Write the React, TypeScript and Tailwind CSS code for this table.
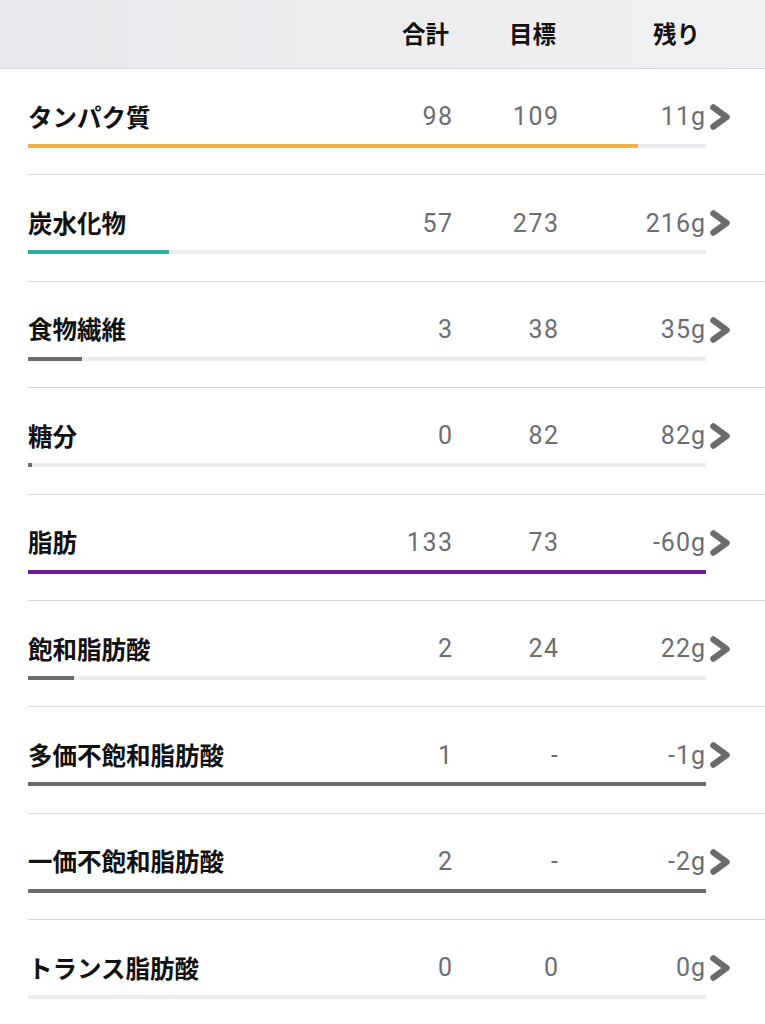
import React from 'react';

interface Nutrient {
  name: string;
  total: string;
  goal: string;
  left: string;
  pct: number;
  color: string;
}

const ROWS: Nutrient[] = [
  { name: 'タンパク質', total: '98', goal: '109', left: '11g', pct: 90, color: 'bg-[#f4b144]' },
  { name: '炭水化物', total: '57', goal: '273', left: '216g', pct: 20.8, color: 'bg-[#2bb3a0]' },
  { name: '食物繊維', total: '3', goal: '38', left: '35g', pct: 8, color: 'bg-[#6c6c70]' },
  { name: '糖分', total: '0', goal: '82', left: '82g', pct: 0.6, color: 'bg-[#6c6c70]' },
  { name: '脂肪', total: '133', goal: '73', left: '-60g', pct: 100, color: 'bg-[#6f1c98]' },
  { name: '飽和脂肪酸', total: '2', goal: '24', left: '22g', pct: 6.8, color: 'bg-[#6c6c70]' },
  { name: '多価不飽和脂肪酸', total: '1', goal: '-', left: '-1g', pct: 100, color: 'bg-[#6c6c70]' },
  { name: '一価不飽和脂肪酸', total: '2', goal: '-', left: '-2g', pct: 100, color: 'bg-[#6c6c70]' },
  { name: 'トランス脂肪酸', total: '0', goal: '0', left: '0g', pct: 0, color: 'bg-[#6c6c70]' },
];

const jp = "font-['Noto_Sans_CJK_JP','Noto_Sans',sans-serif]";
const num = "font-['Roboto','Noto_Sans_CJK_JP',sans-serif]";

const Chevron = () => (
  <svg width="26" height="28" viewBox="0 0 26 28" className="shrink-0">
    <polyline
      points="6.5,4.5 19.5,14 6.5,23.5"
      fill="none"
      stroke="#6b6b6f"
      strokeWidth="6.5"
      strokeLinecap="round"
      strokeLinejoin="round"
    />
  </svg>
);

export default function App() {
  return (
    <div className="w-[765px] h-[1024px] overflow-hidden bg-white">
      {/* Header */}
      <div className="h-[69px] bg-gradient-to-r from-[#e9e9ed] to-[#f1f1f3] border-b border-[#d4d4d8] flex items-center pl-[28px]">
        <div className="w-[324px]" />
        <div className={`w-[97px] text-right text-[23.5px] font-bold text-[#111] ${jp}`}>合計</div>
        <div className={`w-[107px] text-right text-[23.5px] font-bold text-[#111] ${jp}`}>目標</div>
        <div className={`w-[144px] text-right text-[23.5px] font-bold text-[#111] ${jp}`}>残り</div>
      </div>

      {/* Rows */}
      {ROWS.map((row) => (
        <div key={row.name} className="ml-[28px] h-[106.4px] border-b border-[#d9d9dc] pt-[32px]">
          <div className="flex items-center h-[32px]">
            <div className={`w-[324px] text-[24.5px] font-bold text-[#111] ${jp}`}>{row.name}</div>
            <div className={`w-[101.5px] text-right text-[25px] tracking-[1.5px] text-[#6d6d72] ${num}`}>
              {row.total}
            </div>
            <div className={`w-[106px] text-right text-[25px] tracking-[1.5px] text-[#6d6d72] ${num}`}>
              {row.goal}
            </div>
            <div className={`w-[146.5px] text-right text-[25px] tracking-[1px] text-[#6d6d72] ${num}`}>
              {row.left}
            </div>
            <div className="ml-[1px]">
              <Chevron />
            </div>
          </div>
          <div className="mt-[11px] w-[678px] h-[4px] bg-[#ebebf0]">
            <div className={`h-full ${row.color}`} style={{ width: `${row.pct}%` }} />
          </div>
        </div>
      ))}
    </div>
  );
}
